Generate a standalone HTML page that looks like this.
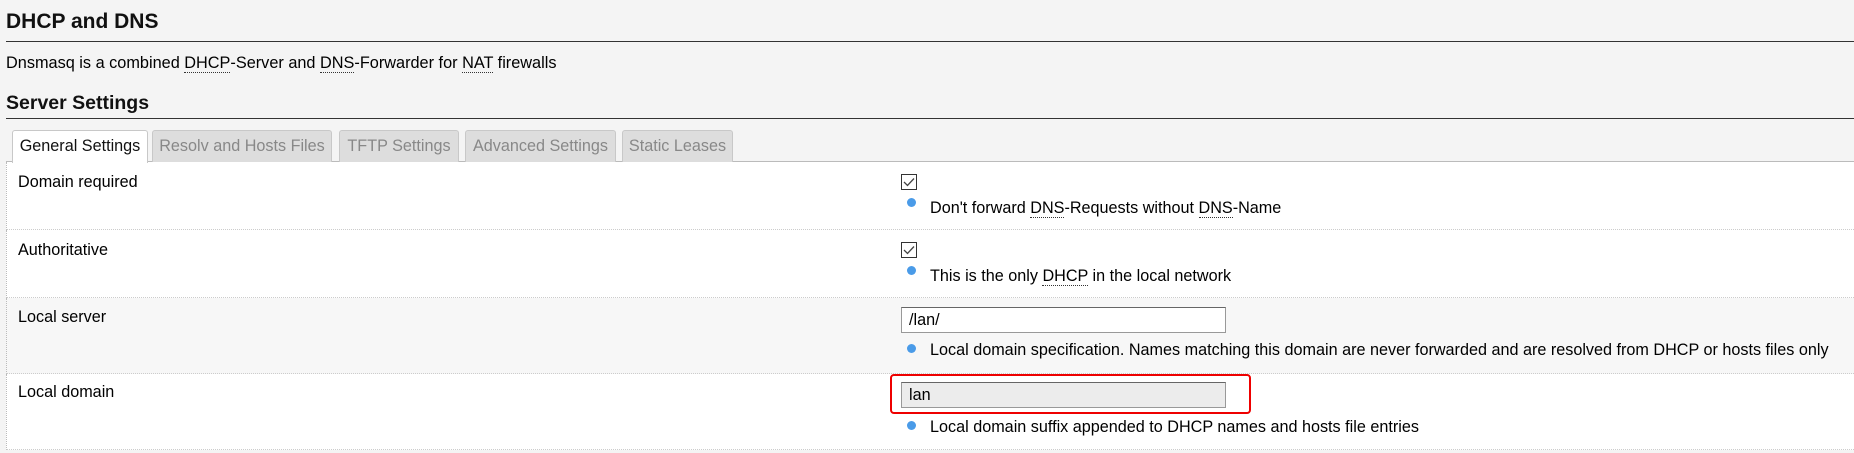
<!DOCTYPE html>
<html><head><meta charset="utf-8"><style>
*{margin:0;padding:0;box-sizing:border-box}
body{width:1854px;height:453px;overflow:hidden;background:#f4f4f4;font-family:"Liberation Sans",Arial,sans-serif;color:#000;position:relative}
.a{position:absolute;white-space:nowrap}
abbr{text-decoration:none;border-bottom:1px dotted #333}
.h1{left:6px;top:10px;font-size:21px;font-weight:bold;color:#111}
.hl{left:6px;right:0;height:1px;background:#333}
.tab{top:130px;height:32px;background:#ddd;border:1px solid #c8c8c8;border-bottom:none;border-radius:3px 3px 0 0;color:#888;font-size:16.2px;line-height:30px;text-align:center}
.row{left:6px;right:0;border-left:1px dotted #bbb;border-bottom:1px dotted #ccc;background:#fff}
.lbl{left:18px;font-size:16.2px}
.cb{left:901px;width:16px;height:16px;border:1.5px solid #333;background:#fff}
.info{left:907px;width:9px;height:9px;border-radius:50%;background:#4a9be8}
.txt{left:930px;font-size:16.2px}
.inp{left:901px;width:325px;height:26px;border:1px solid #999;border-top-color:#666;background:#fff;font-size:16.2px;line-height:24px;padding-left:7px}
</style></head><body>
<div class="a h1">DHCP and DNS</div>
<div class="a hl" style="top:41px"></div>
<div class="a" style="left:6px;top:54px;font-size:16.3px">Dnsmasq is a combined <abbr>DHCP</abbr>-Server and <abbr>DNS</abbr>-Forwarder for <abbr>NAT</abbr> firewalls</div>
<div class="a" style="left:6px;top:92px;font-size:19.5px;font-weight:bold;color:#111">Server Settings</div>
<div class="a hl" style="top:118px"></div>
<div class="a" style="left:6px;right:0;top:161px;height:1px;background:#bbb"></div>
<div class="a tab" style="left:12px;width:136px;background:#fff;color:#111;height:33px;z-index:2">General Settings</div>
<div class="a tab" style="left:152px;width:180px">Resolv and Hosts Files</div>
<div class="a tab" style="left:339px;width:120px">TFTP Settings</div>
<div class="a tab" style="left:465px;width:151px">Advanced Settings</div>
<div class="a tab" style="left:622px;width:111px">Static Leases</div>

<div class="a row" style="top:162px;height:68px"></div>
<div class="a row" style="top:230px;height:68px"></div>
<div class="a row" style="top:298px;height:76px;background:#f7f7f7"></div>
<div class="a row" style="top:374px;height:76px"></div>

<div class="a lbl" style="top:173px">Domain required</div>
<div class="a cb" style="top:174px"></div><svg class="a" style="left:903px;top:177px" width="12" height="10"><path d="M1 5 L4.5 8.5 L11 1.5" stroke="#444" stroke-width="1.3" fill="none"/></svg>
<div class="a info" style="top:198px"></div>
<div class="a txt" style="top:199px">Don't forward <abbr>DNS</abbr>-Requests without <abbr>DNS</abbr>-Name</div>

<div class="a lbl" style="top:241px">Authoritative</div>
<div class="a cb" style="top:242px"></div><svg class="a" style="left:903px;top:245px" width="12" height="10"><path d="M1 5 L4.5 8.5 L11 1.5" stroke="#444" stroke-width="1.3" fill="none"/></svg>
<div class="a info" style="top:266px"></div>
<div class="a txt" style="top:267px">This is the only <abbr>DHCP</abbr> in the local network</div>

<div class="a lbl" style="top:308px">Local server</div>
<div class="a inp" style="top:307px">/lan/</div>
<div class="a info" style="top:344px"></div>
<div class="a txt" style="top:341px">Local domain specification. Names matching this domain are never forwarded and are resolved from DHCP or hosts files only</div>

<div class="a lbl" style="top:383px">Local domain</div>
<div class="a" style="left:890px;top:374px;width:361px;height:40px;border:2px solid #e00;border-radius:4px"></div>
<div class="a inp" style="top:382px;background:#ececec">lan</div>
<div class="a info" style="top:421px"></div>
<div class="a txt" style="top:418px">Local domain suffix appended to DHCP names and hosts file entries</div>
</body></html>
